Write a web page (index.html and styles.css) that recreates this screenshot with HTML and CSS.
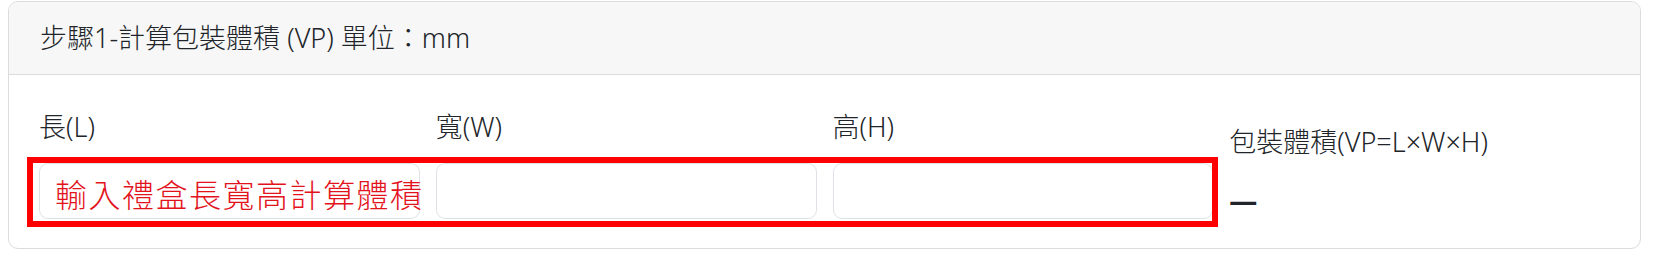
FILE: index.html
```html
<!DOCTYPE html>
<html lang="zh-Hant">
<head>
<meta charset="utf-8">
<title>步驟1-計算包裝體積</title>
<link rel="stylesheet" href="styles.css">
</head>
<body>
<div class="card">
  <div class="card-header">步驟1-計算包裝體積 (VP) 單位：mm</div>
  <div class="card-body">
    <div class="field">
      <label class="field-label">長(L)</label>
      <input class="field-input" type="text">
    </div>
    <div class="field">
      <label class="field-label">寬(W)</label>
      <input class="field-input" type="text">
    </div>
    <div class="field">
      <label class="field-label">高(H)</label>
      <input class="field-input" type="text">
    </div>
    <div class="field result">
      <div class="result-label">包裝體積(VP=L×W×H)</div>
      <div class="result-value">—</div>
    </div>
  </div>
  <div class="annot-box"></div>
  <div class="annot-text">輸入禮盒長寬高計算體積</div>
</div>
</body>
</html>
```
FILE: styles.css
```css
html, body {
  margin: 0;
  background: #fff;
}
body {
  padding: 1px 12px 9px 8px;
  font-family: "Noto Sans", "Noto Sans CJK TC", sans-serif;
  font-size: 27px;
  font-weight: 300;
  line-height: 39px;
  color: #212529;
}
.card {
  position: relative;
  border: 1px solid #dcdcdc;
  border-radius: 10px;
  background: #fff;
  overflow: hidden;
}
.card-header {
  background: #f7f7f7;
  border-bottom: 1px solid #dcdcdc;
  padding: 16px 31px 17px;
}
.card-body {
  display: grid;
  grid-template-columns: repeat(4, 1fr);
  column-gap: 16px;
  padding: 32px 30px 29px;
}
.field {
  display: flex;
  flex-direction: column;
}
.field-label {
  display: block;
  margin-bottom: 17px;
}
.field-input {
  box-sizing: border-box;
  height: 56px;
  width: 100%;
  margin: 0;
  border: 1px solid #dee2e6;
  border-radius: 9px;
  background: #fff;
  font: inherit;
}
.result {
  justify-content: flex-end;
}
.result-label {
  margin-bottom: 20px;
}
.result-value {
  font-size: 28px;
  font-weight: 700;
  line-height: 38px;
}
.annot-box {
  position: absolute;
  left: 18px;
  top: 155px;
  width: 1191px;
  height: 70px;
  box-sizing: border-box;
  border: 6px solid #ff0000;
}
.annot-text {
  position: absolute;
  left: 46px;
  top: 171px;
  font-family: "Noto Sans CJK TC", sans-serif;
  font-size: 32px;
  font-weight: 300;
  line-height: 40px;
  letter-spacing: 1.5px;
  color: #e3131c;
  white-space: nowrap;
}
```
